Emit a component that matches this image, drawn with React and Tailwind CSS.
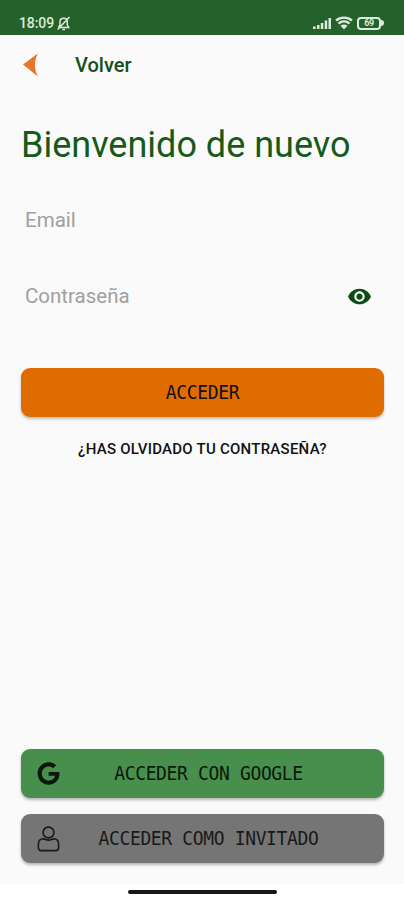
import React from 'react';
import { FaGoogle } from 'react-icons/fa';
import { MdVisibility } from 'react-icons/md';

const StatusBar = () => (
  <header className="flex h-[35px] shrink-0 items-end justify-between bg-[#25622b] pr-[20px] pb-[4px] pl-[19px] text-[#dcebdc]">
    <div className="flex h-[16px] items-center">
      <span className="w-[37px] text-[14px] leading-[16px] font-medium tracking-[-0.1px] whitespace-nowrap">18:09</span>
      <svg className="h-[15px] w-[15px]" viewBox="0 0 14 15" fill="none" stroke="currentColor" strokeWidth="1.5" aria-hidden="true">
        <path d="M2 11.5h10.200L10.800 9V5.500C10.800 3.500 9.300 2.200 7.200 2.200S3.500 3.500 3.500 5.500V9L2 11.500M5.900 13.400h2.600M13 1L1.200 13.500" />
      </svg>
    </div>
    <div className="flex h-[16px] items-center">
      <svg className="h-[14px] w-[19px]" viewBox="0 0 19 14" fill="currentColor" aria-hidden="true">
        <path d="M0 10.500h2.700V13H0zM4 9h2.500v4H4zM7.800 7h2.500v6H7.800zM11.700 4.500h2.500V13h-2.500zM15.500 2H18v11h-2.500z" />
      </svg>
      <svg className="ml-[3px] h-[14px] w-[18px]" viewBox="0 0 18 14" fill="none" stroke="currentColor" aria-hidden="true">
        <path strokeWidth="2.400" d="M1 4.500C5.600.6 12.400.6 17 4.500M3.500 7.500c3.300-2.600 7.700-2.600 11 0" />
        <path fill="currentColor" stroke="none" d="M5.500 9.700c2.100-1.600 4.900-1.600 7 0L9 13.500z" />
      </svg>
      <div className="ml-[4px] flex h-[13px] w-[24px] items-center justify-center rounded-[4px] border-2 border-current text-[9px] leading-none font-bold tracking-[-0.3px]">69</div>
      <div className="h-[6px] w-[3px] rounded-r-full bg-current" />
    </div>
  </header>
);

const GuestIcon = () => (
  <svg className="h-[26px] w-[23px]" viewBox="0 0 23 26" fill="none" stroke="currentColor" strokeWidth="1.6" strokeLinejoin="round" aria-hidden="true">
    <circle cx="11.500" cy="6.500" r="5.400" />
    <path d="M6.500 12.800C3.300 12.900 1.400 15 1.400 18v3.700c0 1.800 1.100 2.900 2.900 2.900h14.400c1.800 0 2.900-1.100 2.900-2.900V18c0-3-1.900-5.100-5.100-5.200-3.100 1.700-6.900 1.700-10 0z" />
  </svg>
);

const SocialButton = ({ icon, label, className }) => (
  <button
    className={`grid h-[49px] w-full grid-cols-[22px_1fr] items-center rounded-[9px] pr-[26px] pl-[16px] shadow-[0_2px_3px_rgba(0,0,0,0.28)] ${className}`}
  >
    {icon}
    <span className="scale-y-[1.05] font-['DejaVu_Sans_Mono',monospace] text-[18px] tracking-[-0.360px] whitespace-nowrap">{label}</span>
  </button>
);

const App = () => (
  <div className="flex h-[900px] w-[404px] flex-col overflow-hidden bg-[#fafafa] font-[Roboto,sans-serif]">
    <StatusBar />

    <nav className="flex h-[61px] shrink-0 items-center pb-[2px] pl-[23px]">
      <svg className="h-[24px] w-[15px]" viewBox="0 0 15 24" fill="#e97529" aria-hidden="true">
        <path d="M14.800.5L0 11.500 14.800 23.500C11 15.500 11 8.500 14.800.5z" />
      </svg>
      <span className="ml-[37px] text-[20px] font-medium text-[#155019]">Volver</span>
    </nav>

    <main className="flex flex-1 flex-col pr-[20px] pl-[21px]">
      <h1 className="mt-[27px] text-[36px] leading-[44px] whitespace-nowrap text-[#155a1b]">Bienvenido de nuevo</h1>

      <div className="mt-[41px] flex h-[24px] items-center px-[4px] text-[20.500px] text-[#a0a0a0]">Email</div>
      <div className="mt-[52px] flex h-[24px] items-center justify-between pr-[12px] pl-[4px] text-[20.500px] text-[#a0a0a0]">
        <span>Contraseña</span>
        <MdVisibility className="size-[25px] text-[#0c4c16]" />
      </div>

      <button className="mt-[60px] h-[49px] w-full rounded-[9px] bg-[#e06c00] font-['DejaVu_Sans_Mono',monospace] text-[18px] tracking-[-0.360px] text-[#111] shadow-[0_2px_3px_rgba(0,0,0,0.25)]">
        <span className="inline-block scale-y-[1.05]">ACCEDER</span>
      </button>
      <button className="mt-[20px] h-[24px] text-[15px] font-medium tracking-[0.250px] whitespace-nowrap text-[#111]">¿HAS OLVIDADO TU CONTRASEÑA?</button>

      <div className="mt-auto flex flex-col gap-[16px] pb-[21px]">
        <SocialButton
          icon={<FaGoogle className="size-[23px]" />}
          label="ACCEDER CON GOOGLE"
          className="bg-[#488f4e] text-[#0b190c]"
        />
        <SocialButton icon={<GuestIcon />} label="ACCEDER COMO INVITADO" className="bg-[#757575] text-[#191919]" />
      </div>
    </main>

    <footer className="flex h-[16px] shrink-0 justify-center bg-white pt-[6px]">
      <div className="h-[4px] w-[149px] rounded-full bg-[#171717]" />
    </footer>
  </div>
);

export default App;
